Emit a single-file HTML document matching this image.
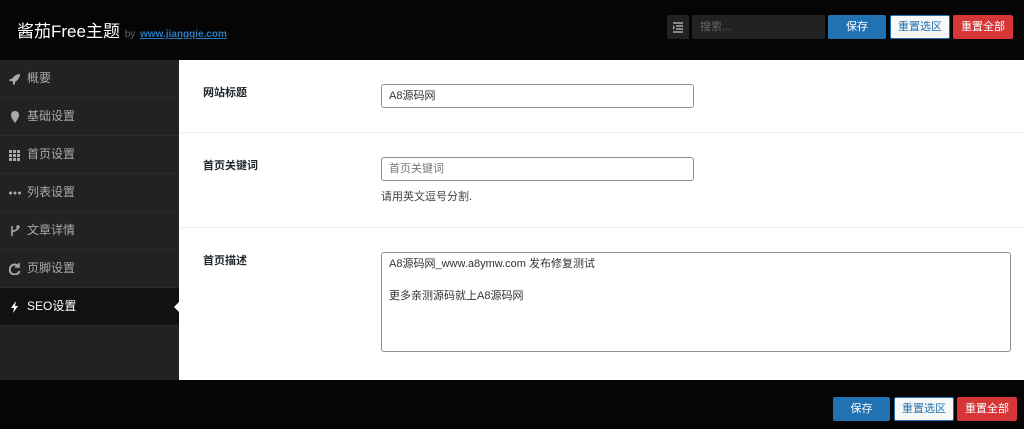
<!DOCTYPE html>
<html><head><meta charset="utf-8"><style>
*{box-sizing:border-box;margin:0;padding:0}
body{width:1024px;height:429px;overflow:hidden;background:#050505;font-family:"Liberation Sans","Noto Sans CJK SC",sans-serif;font-size:12px;position:relative}
.hdr{position:absolute;left:0;top:0;width:1024px;height:60px;background:#050505}
.logo{position:absolute;left:17px;top:17px;color:#fff;font-size:17px}
.logo small{font-size:10px;color:#666}
.logo a{color:#2a7ac0;text-decoration:underline;font-size:10px;font-weight:bold}
.btn{position:absolute;height:24px;line-height:22px;text-align:center;font-size:11px;border-radius:2px;border:1px solid}
.b1{background:#2271b1;border-color:#2271b1;color:#fff}
.b2{background:#f6f7f7;border-color:#2271b1;color:#2271b1}
.b3{background:#d63638;border-color:#d63638;color:#fff}
.side{position:absolute;left:0;top:60px;width:179px;height:320px;background:#222}
.it{height:38px;border-bottom:1px solid #2c2c2c;color:#aaa;line-height:37px;padding-left:27px;position:relative;font-size:12px}
.it svg{position:absolute;left:9px;top:13px}
.it.on{background:#111;color:#fff}
.main{position:absolute;left:179px;top:60px;width:845px;height:320px;background:#fff}
.row{position:absolute;left:0;width:845px;border-bottom:1px solid #eee}
.lbl{position:absolute;left:24px;font-weight:bold;font-size:11px;color:#23282d}
.inp{position:absolute;left:202px;border:1px solid #8c8f94;border-radius:3px;background:#fff;font-size:11px;color:#2c3338;padding-left:7px}
.hint{position:absolute;left:202px;font-size:11px;color:#444}
</style></head><body>
<div class="hdr">
 <div class="logo">酱茄Free主题 <small>by</small> <a>www.jiangqie.com</a></div>
 <div style="position:absolute;left:667px;top:15px;width:22px;height:24px;background:#222;border-radius:2px"><svg width="22" height="24"><g stroke="#aaa" stroke-width="1.5"><path d="M6 8h10M9 11h7M9 14h7M6 17h10"/></g><path d="M6 10l2 2.5-2 2.5z" fill="#aaa"/></svg></div>
 <div style="position:absolute;left:692px;top:15px;width:133px;height:24px;background:#222;border-radius:2px;color:#666;font-size:11px;line-height:24px;padding-left:8px">搜索...</div>
 <div class="btn b1" style="left:828px;top:15px;width:58px">保存</div>
 <div class="btn b2" style="left:890px;top:15px;width:60px">重置选区</div>
 <div class="btn b3" style="left:953px;top:15px;width:60px">重置全部</div>
</div>
<div class="side">
 <div class="it"><svg width="12" height="12"><path d="M11 1C7 1 4 4 3 6L1 6 0 8 3 8 4 9 4 12 6 11 6 9C8 8 11 5 11 1z" fill="#aaa"/></svg>概要</div>
 <div class="it"><svg width="12" height="12"><path d="M6 0C3 0 2 2 2 4c0 3 4 8 4 8s4-5 4-8c0-2-1-4-4-4z" fill="#aaa"/></svg>基础设置</div>
 <div class="it"><svg width="12" height="12" fill="#aaa"><rect x="0" y="1" width="3" height="3"/><rect x="4" y="1" width="3" height="3"/><rect x="8" y="1" width="3" height="3"/><rect x="0" y="5" width="3" height="3"/><rect x="4" y="5" width="3" height="3"/><rect x="8" y="5" width="3" height="3"/><rect x="0" y="9" width="3" height="3"/><rect x="4" y="9" width="3" height="3"/><rect x="8" y="9" width="3" height="3"/></svg>首页设置</div>
 <div class="it"><svg width="12" height="12" fill="#aaa"><circle cx="1.5" cy="6" r="1.5"/><circle cx="6" cy="6" r="1.5"/><circle cx="10.5" cy="6" r="1.5"/></svg>列表设置</div>
 <div class="it"><svg width="12" height="12" fill="none" stroke="#aaa" stroke-width="1.5"><path d="M3 1v10M3 8c0-3 6-2 6-5"/><circle cx="9" cy="2" r="1"/></svg>文章详情</div>
 <div class="it"><svg width="12" height="12" fill="none" stroke="#aaa" stroke-width="2"><path d="M10 4A5 5 0 1 0 10.5 8"/><path d="M10 0v4H6" stroke-width="1.5"/></svg>页脚设置</div>
 <div class="it on"><svg width="12" height="12"><path d="M7 0L2 7h3l-1 5 5-7H6z" fill="#fff"/></svg>SEO设置<span style="position:absolute;right:0;top:14px;width:0;height:0;border:5px solid transparent;border-right-color:#fff"></span></div>
</div>
<div class="main">
 <div class="row" style="top:0;height:73px">
  <div class="lbl" style="top:24px">网站标题</div>
  <div class="inp" style="top:24px;width:313px;height:24px;line-height:22px">A8源码网</div>
 </div>
 <div class="row" style="top:73px;height:95px">
  <div class="lbl" style="top:24px">首页关键词</div>
  <div class="inp" style="top:24px;width:313px;height:24px;line-height:22px;color:#777">首页关键词</div>
  <div class="hint" style="top:55px">请用英文逗号分割.</div>
 </div>
 <div class="row" style="top:168px;height:152px;border:0">
  <div class="lbl" style="top:24px">首页描述</div>
  <div class="inp" style="top:24px;width:630px;height:100px;line-height:16px;padding-top:3px">A8源码网_www.a8ymw.com 发布修复测试<br><br>更多亲测源码就上A8源码网</div>
 </div>
</div>
<div class="btn b1" style="left:833px;top:397px;width:57px">保存</div>
<div class="btn b2" style="left:894px;top:397px;width:60px">重置选区</div>
<div class="btn b3" style="left:957px;top:397px;width:60px">重置全部</div>
</body></html>
